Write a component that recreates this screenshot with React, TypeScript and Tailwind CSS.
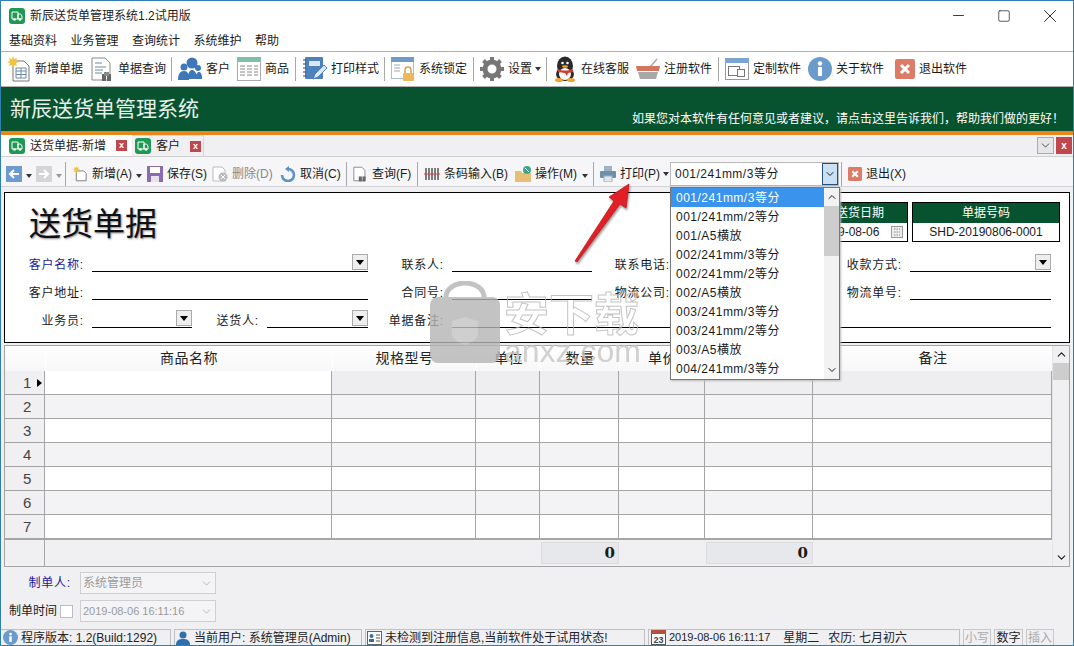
import { ReactNode } from "react";
import { Minus, Square, X, ChevronDown, ChevronUp } from "lucide-react";

const Truck = () => (
  <svg width="16" height="16" viewBox="0 0 16 16" className="shrink-0">
    <rect x="0" y="0" width="16" height="16" rx="3" fill="#1c9a52" />
    <path d="M3 4h6v7H3z M9 6h2.5L13 8v3H9z" fill="none" stroke="#fff" strokeWidth="1" />
    <circle cx="5.5" cy="11.5" r="1.3" fill="#fff" />
    <circle cx="11" cy="11.5" r="1.3" fill="#fff" />
  </svg>
);

const Sun = () => (
  <path d="M6 0l1 3 3-1-1 3 3 1-3 1 1 3-3-1-1 3-1-3-3 1 1-3-3-1 3-1-1-3 3 1z" fill="#f5c33b" />
);

const NewDoc = () => (
  <svg width="24" height="26" viewBox="0 0 24 26">
    <path d="M6 5h11l5 5v15H6z" fill="#fff" stroke="#777" />
    <path d="M9 12h10v10H9z M9 15h10 M9 18.500h10 M14 12v10" fill="none" stroke="#6f8aa6" />
    <Sun />
  </svg>
);
const Search = () => (
  <svg width="24" height="26" viewBox="0 0 24 26">
    <path d="M2 2h13l5 5v17H2z" fill="#fff" stroke="#888" />
    <path d="M5 7h7 M5 11h11 M5 14h8 M5 17h7" stroke="#6f8aa6" />
    <rect x="12" y="18" width="4" height="7" fill="#666" />
    <rect x="17" y="18" width="4" height="7" fill="#666" />
    <rect x="14" y="16" width="5" height="4" fill="#888" />
  </svg>
);
const Users = () => (
  <svg width="24" height="24" viewBox="0 0 24 24">
    <circle cx="14" cy="6" r="5.500" fill="#3f78b8" />
    <circle cx="6" cy="10" r="3.500" fill="#3f78b8" />
    <circle cx="20" cy="11" r="3" fill="#3f78b8" />
    <path d="M0 23c0-6 2-9 6-9s5 3 5 9z M10 22c0-7 2-9 4-9s5 2 5 9z M18 22c0-5 1-7 3-7s3 2 3 7z" fill="#3f78b8" />
  </svg>
);
const Sheet = () => (
  <svg width="24" height="24" viewBox="0 0 24 24">
    <rect x="0.500" y="0.500" width="23" height="23" fill="#fff" stroke="#aaa" />
    <rect x="0" y="0" width="24" height="5" fill="#7fbfa8" />
    <path d="M3 9h5 M3 12h5 M3 15h5 M3 18h5 M10 9h5 M10 12h5 M10 15h5 M10 18h5 M17 9h4 M17 12h4 M17 15h4 M17 18h4" stroke="#888" />
  </svg>
);
const PrintStyle = () => (
  <svg width="24" height="26" viewBox="0 0 24 26">
    <rect x="2" y="1" width="18" height="22" rx="1" fill="#4f81bd" />
    <path d="M0 4h3 M0 8h3 M0 12h3 M0 16h3 M0 20h3" stroke="#345" />
    <rect x="6" y="5" width="11" height="5" fill="#dbe7f3" />
    <path d="M10 23l2-5 9-9 3 3-9 9z" fill="#dbe7f3" stroke="#4f81bd" />
  </svg>
);
const Lock = () => (
  <svg width="24" height="26" viewBox="0 0 24 26">
    <rect x="0.500" y="1.500" width="22" height="21" fill="#fff" stroke="#a9bdd4" />
    <rect x="0" y="1" width="23" height="5" fill="#6f9bcb" />
    <path d="M3 9h6 M3 12h6 M3 15h6" stroke="#9ab" />
    <path d="M14 17v-3a3 3 0 0 1 6 0v3" fill="none" stroke="#d9a441" strokeWidth="1.500" />
    <rect x="12" y="17" width="11" height="8" rx="1" fill="#eeb85a" />
  </svg>
);
const Gear = () => (
  <svg width="24" height="24" viewBox="0 0 24 24">
    <circle cx="12" cy="12" r="7" fill="none" stroke="#777" strokeWidth="5" />
    <path d="M12 0v24 M0 12h24 M3.500 3.500l17 17 M20.500 3.500l-17 17" stroke="#777" strokeWidth="4" strokeDasharray="4 16" />
  </svg>
);
const Penguin = () => (
  <svg width="24" height="26" viewBox="0 0 24 26">
    <ellipse cx="12" cy="10" rx="8" ry="9.500" fill="#2a2a2a" />
    <ellipse cx="12" cy="18" rx="9" ry="7" fill="#2a2a2a" />
    <ellipse cx="12" cy="18" rx="6" ry="6" fill="#fff" />
    <path d="M5 13c4 2 10 2 14 0l1 3-5 1-1 3-2-3-7-1z" fill="#d8392b" />
    <ellipse cx="6" cy="24" rx="4" ry="2" fill="#f0a52e" />
    <ellipse cx="18" cy="24" rx="4" ry="2" fill="#f0a52e" />
    <circle cx="9.500" cy="7" r="1.300" fill="#fff" />
    <circle cx="14.500" cy="7" r="1.300" fill="#fff" />
    <ellipse cx="12" cy="10.500" rx="3" ry="1.300" fill="#f0a52e" />
  </svg>
);
const Basket = () => (
  <svg width="24" height="24" viewBox="0 0 24 24">
    <path d="M14 10l7-8" stroke="#aaa" strokeWidth="1.500" />
    <path d="M0 9h24l-1 5H1z" fill="#d5745f" />
    <path d="M2 15h20l-2 7H4z" fill="#a8a8a8" />
  </svg>
);
const Win = () => (
  <svg width="24" height="24" viewBox="0 0 24 24">
    <rect x="0.500" y="1.500" width="23" height="21" fill="#fff" stroke="#999" />
    <rect x="0" y="1" width="24" height="5" fill="#7aa5d0" />
    <rect x="3.500" y="9.500" width="11" height="9" fill="none" stroke="#777" />
    <rect x="12.500" y="12.500" width="7" height="7" fill="#fff" stroke="#777" />
  </svg>
);
const Info = ({ size = 24 }: { size?: number }) => (
  <svg width={size} height={size} viewBox="0 0 24 24" className="shrink-0">
    <circle cx="12" cy="12" r="12" fill="#6b9bcb" />
    <rect x="10" y="10" width="4" height="9" fill="#fff" />
    <circle cx="12" cy="6.500" r="2.200" fill="#fff" />
  </svg>
);
const Exit = ({ size = 20 }: { size?: number }) => (
  <svg width={size} height={size} viewBox="0 0 20 20" className="shrink-0">
    <rect width="20" height="20" rx="2" fill="#dd7c66" />
    <path d="M6 6l8 8 M14 6l-8 8" stroke="#fff" strokeWidth="3" />
  </svg>
);
const Close = () => (
  <div className="flex h-[11px] w-[11px] shrink-0 items-center justify-center bg-[#c0474e] text-[9px] font-bold leading-none text-white">x</div>
);
const Caret = ({ light }: { light?: boolean }) => (
  <span className={`inline-block h-0 w-0 shrink-0 border-x-[3px] border-t-[4px] border-x-transparent ${light ? "border-t-[#999]" : "border-t-[#333]"}`} />
);
const Arrow = ({ right, dim }: { right?: boolean; dim?: boolean }) => (
  <div className={`flex h-[16px] w-[16px] shrink-0 items-center justify-center ${dim ? "bg-[#d5d5d5]" : "bg-[#6d9bd0]"}`}>
    <svg width="12" height="12" viewBox="0 0 12 12">
      <path d={right ? "M1 6h9 M6 2l4 4-4 4" : "M11 6H2 M6 2L2 6l4 4"} stroke="#fff" strokeWidth="2" fill="none" />
    </svg>
  </div>
);
const Sep = ({ className }: { className: string }) => <div className={`h-[24px] w-px shrink-0 bg-[#a8a8a8] ${className}`} />;

const Tool = ({ icon, label, className }: { icon: ReactNode; label: string; className: string }) => (
  <div className={`flex shrink-0 items-center gap-1 ${className}`}>
    <div className="flex w-6 shrink-0 justify-center">{icon}</div>
    <span className="whitespace-nowrap">{label}</span>
  </div>
);

const SmallTool = ({ icon, label, className, dim }: { icon: ReactNode; label: string; className: string; dim?: boolean }) => (
  <div className={`flex shrink-0 items-center gap-1 ${className}`}>
    {icon}
    <span className={`whitespace-nowrap ${dim ? "text-[#888]" : ""}`}>{label}</span>
  </div>
);

const DropBtn = () => (
  <div className="flex h-[16px] w-[16px] items-center justify-center border border-[#aaa] bg-[#eeeeee]">
    <span className="h-0 w-0 border-x-[4px] border-t-[5px] border-x-transparent border-t-black" />
  </div>
);

const Field = ({ label, lw, fw, drop, blue }: { label: string; lw: string; fw: string; drop?: boolean; blue?: boolean }) => (
  <>
    <div className={`shrink-0 whitespace-nowrap pr-[8px] text-right leading-[14px] tracking-[0.8px] ${lw} ${blue ? "text-[#1a1a9c]" : ""}`}>{label}</div>
    <div className={`flex h-[18px] shrink-0 items-start justify-end border-b border-black ${fw}`}>{drop && <DropBtn />}</div>
  </>
);

const columns = ["商品名称", "规格型号", "单位", "数量", "单价", "金额", "备注"];
const rows = [1, 2, 3, 4, 5, 6, 7];
const gridCols = "grid grid-cols-[40px_287px_144px_64px_79px_86px_108px_239px]";

const options = [
  "001/241mm/3等分", "001/241mm/2等分", "001/A5横放", "002/241mm/3等分", "002/241mm/2等分",
  "002/A5横放", "003/241mm/3等分", "003/241mm/2等分", "003/A5横放", "004/241mm/3等分",
];

function rowBg(row: number, col: number) {
  if (col === 0) return "bg-[#f0eff2]";
  if (row === 1) return col === 1 ? "bg-white" : "bg-[#eeedf0]";
  return row % 2 === 0 ? "bg-[#f3f2f5]" : "bg-white";
}

export default function App() {
  return (
    <div className="relative flex h-[646px] w-[1074px] flex-col overflow-hidden border border-[#2f7fb3] bg-[#f0eff2] font-['Liberation_Sans','Noto_Sans_CJK_SC',sans-serif] text-[12px] text-[#1a1a1a]">
      {/* title bar */}
      <div className="flex h-[29px] shrink-0 items-center bg-white pl-[8px]">
        <Truck />
        <span className="ml-[5px] text-[#222]">新辰送货单管理系统1.2试用版</span>
        <div className="ml-auto flex items-center">
          <div className="flex w-[46px] justify-center"><Minus size={17} strokeWidth={1.2} /></div>
          <div className="flex w-[46px] justify-center"><Square size={14} strokeWidth={1.2} /></div>
          <div className="flex w-[46px] justify-center"><X size={22} strokeWidth={1} /></div>
        </div>
      </div>
      {/* menu */}
      <div className="flex h-[21px] shrink-0 items-center gap-[13.5px] bg-white pl-[8px]">
        {["基础资料", "业务管理", "查询统计", "系统维护", "帮助"].map((m) => (
          <span key={m}>{m}</span>
        ))}
      </div>
      {/* main toolbar */}
      <div className="flex h-[36px] shrink-0 items-center border-y border-[#b0b0b0] bg-white pl-[6px]">
        <Tool icon={<NewDoc />} label="新增单据" className="w-[83px]" />
        <Tool icon={<Search />} label="单据查询" className="w-[81px]" />
        <Sep className="mr-[6px]" />
        <Tool icon={<Users />} label="客户" className="w-[59px]" />
        <Tool icon={<Sheet />} label="商品" className="w-[58px]" />
        <Sep className="mr-[7px]" />
        <Tool icon={<PrintStyle />} label="打印样式" className="w-[81px]" />
        <Sep className="mr-[6px]" />
        <Tool icon={<Lock />} label="系统锁定" className="w-[82px]" />
        <Sep className="mr-[6px]" />
        <Tool icon={<Gear />} label="设置" className="w-[55px]" />
        <div className="flex w-[11px]"><Caret /></div>
        <Sep className="mr-[6px]" />
        <Tool icon={<Penguin />} label="在线客服" className="w-[83px]" />
        <Tool icon={<Basket />} label="注册软件" className="w-[82px]" />
        <Sep className="mr-[6px]" />
        <Tool icon={<Win />} label="定制软件" className="w-[83px]" />
        <Tool icon={<Info />} label="关于软件" className="w-[85px]" />
        <Tool icon={<Exit />} label="退出软件" className="w-[80px] gap-[2px]" />
      </div>
      {/* banner */}
      <div className="flex h-[44px] shrink-0 items-center justify-between bg-[#07532f] pl-[9px] pr-[9px] text-white">
        <span className="text-[21px] text-[#e6efe9]">新辰送货单管理系统</span>
        <span className="mt-[20px]">如果您对本软件有任何意见或者建议，请点击这里告诉我们，帮助我们做的更好！</span>
      </div>
      <div className="h-1 shrink-0 bg-[#e8871e]" />
      {/* tabs */}
      <div className="flex h-[22px] shrink-0 items-stretch border-b border-[#cfcfd2]">
        <div className="flex w-[131px] items-center bg-white pl-[8px]">
          <Truck />
          <span className="ml-[5px] w-[86px] text-[#222]">送货单据-新增</span>
          <Close />
        </div>
        <div className="flex w-[72px] items-center border-r border-t border-[#d8d8da] pl-[3px]">
          <Truck />
          <span className="ml-[5px] w-[34px]">客户</span>
          <Close />
        </div>
        <div className="ml-auto flex items-center gap-[2px] pr-[1px]">
          <div className="flex h-[17px] w-[17px] items-center justify-center border border-[#aaa] bg-[#e6e6e8]"><ChevronDown size={13} strokeWidth={1.3} /></div>
          <div className="flex h-[17px] w-[16px] items-center justify-center bg-[#c0474e] text-[10px] font-bold text-white">x</div>
        </div>
      </div>
      {/* document toolbar */}
      <div className="flex h-[30px] shrink-0 items-center border-b border-[#d4d4d8] bg-[#f6f6f8] pl-[5px] pt-[5px]">
        <Arrow />
        <div className="ml-[4px] mr-[4px]"><Caret /></div>
        <Arrow right dim />
        <div className="ml-[4px] mr-[3px]"><Caret light /></div>
        <Sep className="mr-[6px]" />
        <SmallTool
          className="w-[65px]"
          label="新增(A)"
          icon={<svg width="16" height="16" viewBox="0 0 24 26"><path d="M6 8h12l4 4v12H6z" fill="#fff" stroke="#777" strokeWidth="1.500" /><Sun /></svg>}
        />
        <div className="mr-[5px] ml-[-1px]"><Caret /></div>
        <SmallTool
          className="w-[65px]"
          label="保存(S)"
          icon={<svg width="16" height="16" viewBox="0 0 16 16"><rect width="16" height="16" fill="#8b6bb1" /><rect x="3" y="1" width="10" height="6" fill="#fff" /><rect x="4" y="10" width="8" height="6" fill="#e8e4ef" /></svg>}
        />
        <SmallTool
          className="w-[68px]"
          dim
          label="删除(D)"
          icon={<svg width="16" height="16" viewBox="0 0 16 16"><path d="M1 1h9l3 3v11H1z" fill="#fff" stroke="#bbb" /><circle cx="11" cy="11" r="4.500" fill="#bbb" /><path d="M9 9l4 4 M13 9l-4 4" stroke="#fff" /></svg>}
        />
        <SmallTool
          className="w-[66px]"
          label="取消(C)"
          icon={<svg width="16" height="16" viewBox="0 0 16 16"><path d="M8 3a6 6 0 1 1-6 6" fill="none" stroke="#5b93c9" strokeWidth="2.500" /><path d="M9 0v6L5 3z" fill="#5b93c9" /></svg>}
        />
        <Sep className="mr-[5px]" />
        <SmallTool
          className="w-[65px]"
          label="查询(F)"
          icon={<svg width="16" height="16" viewBox="0 0 24 26"><path d="M2 2h13l5 5v17H2z" fill="#fff" stroke="#888" strokeWidth="1.500" /><rect x="10" y="17" width="5" height="8" fill="#666" /><rect x="16" y="17" width="5" height="8" fill="#666" /></svg>}
        />
        <Sep className="mr-[6px]" />
        <SmallTool
          className="w-[91px]"
          label="条码输入(B)"
          icon={<svg width="16" height="16" viewBox="0 0 16 16"><path d="M2 2v12 M5 2v12 M8 2v12 M11 2v12 M14 2v12" stroke="#555" strokeWidth="1.500" /><path d="M0 8h16" stroke="#d04040" /></svg>}
        />
        <SmallTool
          className="w-[68px]"
          label="操作(M)"
          icon={<svg width="16" height="16" viewBox="0 0 16 16"><path d="M0 5h6l1 2h9v9H0z" fill="#e8bd74" /><circle cx="12" cy="4" r="4" fill="#43a586" /><path d="M10 2l4 4" stroke="#fff" /></svg>}
        />
        <div className="mr-[5px] ml-[-1px]"><Caret /></div>
        <Sep className="mr-[6px]" />
        <SmallTool
          className="w-[63px]"
          label="打印(P)"
          icon={<svg width="16" height="16" viewBox="0 0 16 16"><rect x="4" y="0" width="8" height="6" fill="#9db2c4" /><rect x="0" y="5" width="16" height="7" rx="1" fill="#6f8fa9" /><rect x="4" y="10" width="8" height="6" fill="#dfe5ea" stroke="#9db2c4" /></svg>}
        />
        <Caret />
        <div className="ml-[1px] flex h-[24px] w-[169px] shrink-0 items-center justify-between border border-[#b8b8b8] bg-white pl-[4px] tracking-[0.5px]">
          <span>001/241mm/3等分</span>
          <div className="flex h-full w-[16px] items-center justify-center border border-[#26507c] bg-[#c9e0f5]"><ChevronDown size={12} /></div>
        </div>
        <Sep className="ml-[2px] mr-[6px]" />
        <SmallTool className="" label="退出(X)" icon={<Exit size={14} />} />
      </div>
      {/* form */}
      <div className="mx-[3px] mt-[5px] flex h-[151px] shrink-0 flex-col border border-black bg-white">
        <div className="flex h-[51px] shrink-0 justify-between pr-[9px] pt-[9px]">
          <div className="pl-[24px] text-[32px] leading-[44px] text-[#111] [text-shadow:1px_1px_2px_#888]">送货单据</div>
          <div className="flex gap-[4px]">
            <div className="flex h-[40px] w-[96px] flex-col border border-black">
              <div className="flex h-[20px] items-center justify-center bg-[#07532f] text-white">送货日期</div>
              <div className="flex flex-1 items-center justify-between pl-[5px] pr-[4px]">
                <span className="whitespace-nowrap">2019-08-06</span>
                <svg width="12" height="12" viewBox="0 0 12 12" className="shrink-0"><rect x="0.500" y="0.500" width="11" height="11" fill="#eee" stroke="#999" /><path d="M3 3h6 M3 6h6 M3 9h6" stroke="#888" strokeDasharray="1.500 1" /></svg>
              </div>
            </div>
            <div className="flex h-[40px] w-[148px] flex-col border border-black">
              <div className="flex h-[20px] items-center justify-center bg-[#07532f] text-white">单据号码</div>
              <div className="flex flex-1 items-center justify-center">SHD-20190806-0001</div>
            </div>
          </div>
        </div>
        <div className="flex h-[28px] shrink-0 items-end">
          <Field label="客户名称:" lw="w-[87px]" fw="w-[276px]" drop blue />
          <Field label="联系人:" lw="w-[84px]" fw="w-[140px]" />
          <Field label="联系电话:" lw="w-[86px]" fw="w-[152px]" />
          <Field label="收款方式:" lw="w-[80px]" fw="w-[141px]" drop />
        </div>
        <div className="flex h-[28px] shrink-0 items-end">
          <Field label="客户地址:" lw="w-[87px]" fw="w-[276px]" />
          <Field label="合同号:" lw="w-[84px]" fw="w-[140px]" />
          <Field label="物流公司:" lw="w-[86px]" fw="w-[152px]" />
          <Field label="物流单号:" lw="w-[80px]" fw="w-[141px]" />
        </div>
        <div className="flex h-[28px] shrink-0 items-end">
          <Field label="业务员:" lw="w-[87px]" fw="w-[100px]" drop />
          <Field label="送货人:" lw="w-[75px]" fw="w-[101px]" drop />
          <Field label="单据备注:" lw="w-[84px]" fw="w-[599px]" />
        </div>
      </div>
      {/* items grid */}
      <div className="mx-[3px] mt-[2px] flex h-[222px] shrink-0 border border-[#a5a5a5] bg-[#f0eff2]">
        <div className="flex w-[1047px] shrink-0 flex-col">
          <div className={`${gridCols} h-[25px] shrink-0 bg-gradient-to-b from-white to-[#f7f7f9] text-[14px] tracking-[0.5px] text-[#222]`}>
            <div />
            {columns.map((c) => (
              <div key={c} className="flex items-center justify-center border-l border-white">{c}</div>
            ))}
          </div>
          {rows.map((r) => (
            <div key={r} className={`${gridCols} h-[24px] shrink-0 border-b border-[#a5a5a5]`}>
              <div className={`flex items-center justify-between border-r border-[#a5a5a5] pl-[18px] pr-[2px] text-[15px] leading-none text-[#444] ${rowBg(r, 0)}`}>
                <span>{r}</span>
                {r === 1 && <span className="h-0 w-0 border-y-[4px] border-l-[5px] border-y-transparent border-l-black" />}
              </div>
              {columns.map((c, i) => (
                <div key={c} className={`border-r border-[#a5a5a5] ${rowBg(r, i + 1)}`} />
              ))}
            </div>
          ))}
          <div className={`${gridCols} min-h-0 flex-1 border-t border-[#a5a5a5]`}>
            <div className="border-r border-[#a5a5a5]" />
            <div />
            <div />
            <div />
            <div className="my-[2px] ml-[1px] flex items-center justify-end border border-[#dcdcdf] bg-[#e6e8eb] pr-[3px] font-['DejaVu_Serif',serif] text-[15px] font-bold leading-none">0</div>
            <div />
            <div className="my-[2px] ml-[1px] flex items-center justify-end border border-[#dcdcdf] bg-[#e6e8eb] pr-[4px] font-['DejaVu_Serif',serif] text-[15px] font-bold leading-none">0</div>
            <div />
          </div>
        </div>
        <div className="flex w-[17px] flex-col items-center border-l border-[#e4e4e6]">
          <ChevronUp size={13} className="mt-[2px] shrink-0" />
          <div className="mt-[2px] h-[17px] w-full bg-[#cdcdcd]" />
          <ChevronDown size={13} className="mb-[2px] mt-auto shrink-0" />
        </div>
      </div>
      {/* footer fields */}
      <div className="flex flex-1 flex-col gap-[6px] pl-[8px] pt-[5px]">
        <div className="flex h-[22px] items-center">
          <span className="w-[71px] pr-[9px] text-right tracking-[0.8px] text-[#1a1a9c]">制单人:</span>
          <div className="flex h-[22px] w-[136px] items-center justify-between border border-[#cfcfd2] bg-[#f4f4f6] pl-[2px] pr-[2px] text-[#9a9a9a]">
            <span>系统管理员</span>
            <ChevronDown size={13} strokeWidth={1.2} />
          </div>
        </div>
        <div className="flex h-[22px] items-center">
          <span className="w-[51px]">制单时间</span>
          <div className="mr-[7px] h-[13px] w-[13px] border border-[#bdbdc0] bg-white" />
          <div className="flex h-[22px] w-[136px] items-center justify-between border border-[#cfcfd2] bg-[#f4f4f6] pl-[2px] pr-[2px] text-[#9a9a9a]">
            <span className="text-[11px]">2019-08-06 16:11:16</span>
            <ChevronDown size={13} strokeWidth={1.2} />
          </div>
        </div>
      </div>
      {/* status bar */}
      <div className="flex h-[16px] shrink-0 items-center gap-[3px] text-[#222]">
        <div className="flex h-full w-[170px] items-center gap-[3px] border-r border-t border-[#c0c0c4] pl-[2px]">
          <Info size={15} />
          <span className="whitespace-nowrap">程序版本: 1.2(Build:1292)</span>
        </div>
        <div className="flex h-full w-[188px] items-center gap-[4px] border-x border-t border-[#c0c0c4] pl-[1px]">
          <svg width="14" height="14" viewBox="0 0 14 14" className="shrink-0"><circle cx="7" cy="4" r="3.500" fill="#2f6fae" /><path d="M0 14c0-5 3-6 7-6s7 1 7 6z" fill="#2f6fae" /></svg>
          <span className="whitespace-nowrap">当前用户: 系统管理员(Admin)</span>
        </div>
        <div className="flex h-full w-[280px] items-center gap-[3px] border-x border-t border-[#c0c0c4] pl-[1px]">
          <svg width="15" height="14" viewBox="0 0 15 14" className="shrink-0"><rect x="0.500" y="0.500" width="14" height="13" fill="#fff" stroke="#666" /><circle cx="4.500" cy="5" r="2" fill="#2f6fae" /><rect x="2" y="8" width="5" height="3" fill="#2f6fae" /><path d="M9 4h4 M9 7h4 M9 10h4" stroke="#555" /></svg>
          <span className="whitespace-nowrap">未检测到注册信息,当前软件处于试用状态!</span>
        </div>
        <div className="flex h-full w-[312px] items-center gap-[3px] border-x border-t border-[#c0c0c4] pl-[2px]">
          <svg width="15" height="15" viewBox="0 0 15 15" className="shrink-0"><rect x="0.500" y="0.500" width="14" height="14" fill="#fff" stroke="#555" /><rect width="15" height="4" fill="#b5523f" /><text x="7.500" y="13" fontSize="9" fontWeight="bold" textAnchor="middle" fill="#444">23</text></svg>
          <span className="whitespace-nowrap text-[11px]">2019-08-06 16:11:17</span>
          <span className="ml-[10px] whitespace-nowrap">星期二</span>
          <span className="ml-[6px] whitespace-nowrap">农历: 七月初六</span>
        </div>
        <div className="flex h-full w-[28px] items-center justify-center border border-b-0 border-[#c8c8cb] text-[#aaa]">小写</div>
        <div className="flex h-full w-[29px] items-center justify-center border border-b-0 border-[#c8c8cb]">数字</div>
        <div className="flex h-full w-[28px] items-center justify-center border border-b-0 border-[#c8c8cb] text-[#aaa]">插入</div>
      </div>

      {/* watermark */}
      <div className="pointer-events-none absolute left-[429px] top-[280px] flex items-start gap-[4px] opacity-80">
        <svg width="70" height="82" viewBox="0 0 70 82">
          <path d="M16 20V16a19 14 0 0 1 38 0v4" fill="none" stroke="#b5b5b5" strokeWidth="5" />
          <rect y="16" width="70" height="66" rx="8" fill="#b5b5b5" />
          <path d="M35 36l13 4v12c0 6-7 10-13 12-6-2-13-6-13-12V40z" fill="#c4c4c4" />
        </svg>
        <div className="flex flex-col pt-[12px]">
          <span className="text-[45px] font-bold leading-[46px] text-transparent [-webkit-text-stroke:1px_#b5b5b5]">安下载</span>
          <span className="mt-[-3px] text-[32px] leading-[30px] text-[#c6c6c6]">anxz.com</span>
        </div>
      </div>

      {/* open combo list */}
      <div className="absolute left-[669px] top-[186px] flex h-[193px] w-[170px] border border-[#777] bg-white tracking-[0.5px] shadow-[1px_1px_2px_#bbb]">
        <div className="flex w-[153px] flex-col">
          {options.map((o, i) => (
            <div key={i} className={`flex h-[19px] shrink-0 items-center pl-[5px] ${i === 0 ? "bg-[#3a94ee] text-white" : ""}`}>{o}</div>
          ))}
        </div>
        <div className="flex flex-1 flex-col items-center bg-[#f2f2f2]">
          <ChevronUp size={12} className="mt-[3px] shrink-0" />
          <div className="mt-[3px] h-[50px] w-full bg-[#cdcdcd]" />
          <ChevronDown size={12} className="mb-[3px] mt-auto shrink-0" />
        </div>
      </div>

      {/* red arrow */}
      <svg width="70" height="95" viewBox="0 0 70 95" className="absolute left-[566px] top-[174px] drop-shadow-[1px_2px_1px_rgba(0,0,0,0.4)]">
        <path d="M8 86L47 26l-5-4 20-13-3 24-6-4L10 87z" fill="#e01f26" stroke="#c41a20" strokeWidth="0.800" />
      </svg>
    </div>
  );
}
